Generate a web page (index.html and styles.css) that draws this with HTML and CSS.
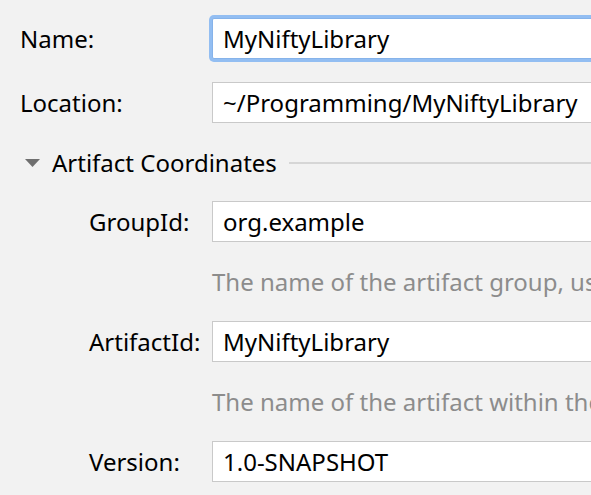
FILE: index.html
```html
<!DOCTYPE html>
<html>
<head>
<meta charset="utf-8">
<link rel="stylesheet" href="styles.css">
</head>
<body>
<div class="page">
  <div class="row">
    <div class="label">Name:</div>
    <div class="field focused">MyNiftyLibrary</div>
  </div>
  <div class="row row-gap">
    <div class="label">Location:</div>
    <div class="field">~/Programming/MyNiftyLibrary</div>
  </div>
  <div class="section-head">
    <svg class="arrow" width="15" height="8" viewBox="0 0 15 8"><polygon points="0,0 15,0 7.5,8" fill="#6f6f6f"/></svg>
    <span class="section-title">Artifact Coordinates</span>
    <div class="sep"></div>
  </div>
  <div class="section-body">
    <div class="row">
      <div class="label sub">GroupId:</div>
      <div class="field">org.example</div>
    </div>
    <div class="hint">The name of the artifact group, usually a company domain</div>
    <div class="row">
      <div class="label sub">ArtifactId:</div>
      <div class="field">MyNiftyLibrary</div>
    </div>
    <div class="hint">The name of the artifact within the group, usually a project name</div>
    <div class="row">
      <div class="label sub">Version:</div>
      <div class="field">1.0-SNAPSHOT</div>
    </div>
  </div>
</div>
</body>
</html>
```
FILE: styles.css
```css
html, body {
  margin: 0;
  padding: 0;
  background: #f2f2f2;
  overflow: hidden;
}
body {
  width: 591px;
  height: 495px;
  font-family: "Noto Sans", sans-serif;
  font-size: 24px;
  color: #000;
}
.page {
  width: 800px;
  padding: 18px 0 0 20px;
}
.row {
  display: flex;
  align-items: center;
  height: 41px;
}
.row-gap {
  margin-top: 23px;
}
.label {
  width: 192px;
  flex: none;
  line-height: 41px;
}
.label.sub {
  width: 123px;
}
.field {
  flex: 1;
  height: 41px;
  box-sizing: border-box;
  border: 1px solid #c9c9c9;
  background: #fff;
  padding-left: 10px;
  display: flex;
  align-items: center;
  white-space: nowrap;
}
.field.focused {
  border-color: #86b3ea;
  border-radius: 2px;
  box-shadow: 0 0 0 3px #93bef2;
}
.section-head {
  display: flex;
  align-items: center;
  height: 41px;
  margin-top: 19px;
}
.arrow {
  margin-left: 5px;
  flex: none;
}
.section-title {
  margin-left: 12px;
  white-space: nowrap;
}
.sep {
  flex: 1;
  height: 2px;
  background: #d6d6d6;
  margin-left: 12px;
}
.section-body {
  padding-left: 69px;
  margin-top: 18px;
}
.hint {
  margin-left: 123px;
  height: 79px;
  line-height: 79px;
  color: #8c8c8c;
  white-space: nowrap;
}
```
